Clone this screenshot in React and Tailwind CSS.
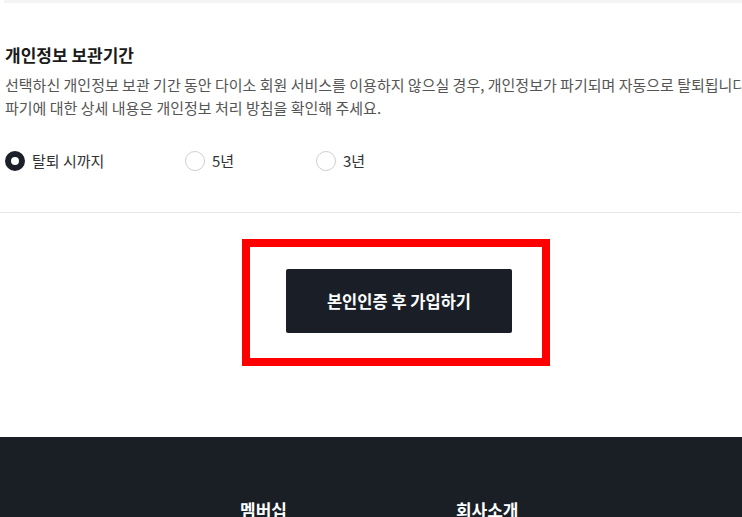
import React from "react";

function Radio({ checked, label }) {
  return (
    <label className="flex items-center gap-[7px]">
      {checked ? (
        <span className="w-[20px] h-[20px] rounded-full border-[6px] border-[#1b2029] bg-white box-border" />
      ) : (
        <span className="w-[20px] h-[20px] rounded-full border border-[#cfcfcf] bg-white box-border" />
      )}
      <span className="text-[15px] text-[#333] leading-[20px]">{label}</span>
    </label>
  );
}

export default function App() {
  return (
    <div
      className="relative w-[742px] h-[517px] overflow-hidden bg-white"
      style={{ fontFamily: '"Noto Sans CJK KR", "Noto Sans", sans-serif' }}
    >
      <div className="ml-[4px] h-[3px] bg-[#f4f4f4]" />
      <div className="w-[798px]">
        <div className="pl-[5px] pt-[40px]">
          <h2 className="text-[17px] font-bold text-[#1a1a1a] leading-[24px]">개인정보 보관기간</h2>
          <p className="mt-[6px] text-[15px] text-[#555] leading-[23px] whitespace-nowrap">
            선택하신 개인정보 보관 기간 동안 다이소 회원 서비스를 이용하지 않으실 경우, 개인정보가 파기되며 자동으로 탈퇴됩니다.
            <br />
            파기에 대한 상세 내용은 개인정보 처리 방침을 확인해 주세요.
          </p>
          <div className="mt-[32px] flex items-center">
            <div className="w-[180px]">
              <Radio checked label="탈퇴 시까지" />
            </div>
            <div className="w-[131px]">
              <Radio label="5년" />
            </div>
            <Radio label="3년" />
          </div>
        </div>
        <div className="mt-[41px] h-px bg-[#e8e8e8] w-[741px]" />
        <div className="flex justify-center pt-[56px] pb-[104px]">
          <button className="w-[226px] h-[64px] rounded-[2px] bg-[#1a1f27] text-white text-[16.5px] font-bold">
            본인인증 후 가입하기
          </button>
        </div>
      </div>
      <footer className="bg-[#1a1f26] h-[200px] pt-[60px]">
        <div className="flex">
          <div className="ml-[240px] text-[17px] font-bold text-white">멤버십</div>
          <div className="ml-[169px] text-[17px] font-bold text-white">회사소개</div>
        </div>
      </footer>
      <div className="absolute left-[242px] top-[239px] w-[308px] h-[127px] border-[8px] border-[#ff0000] pointer-events-none" />
    </div>
  );
}
